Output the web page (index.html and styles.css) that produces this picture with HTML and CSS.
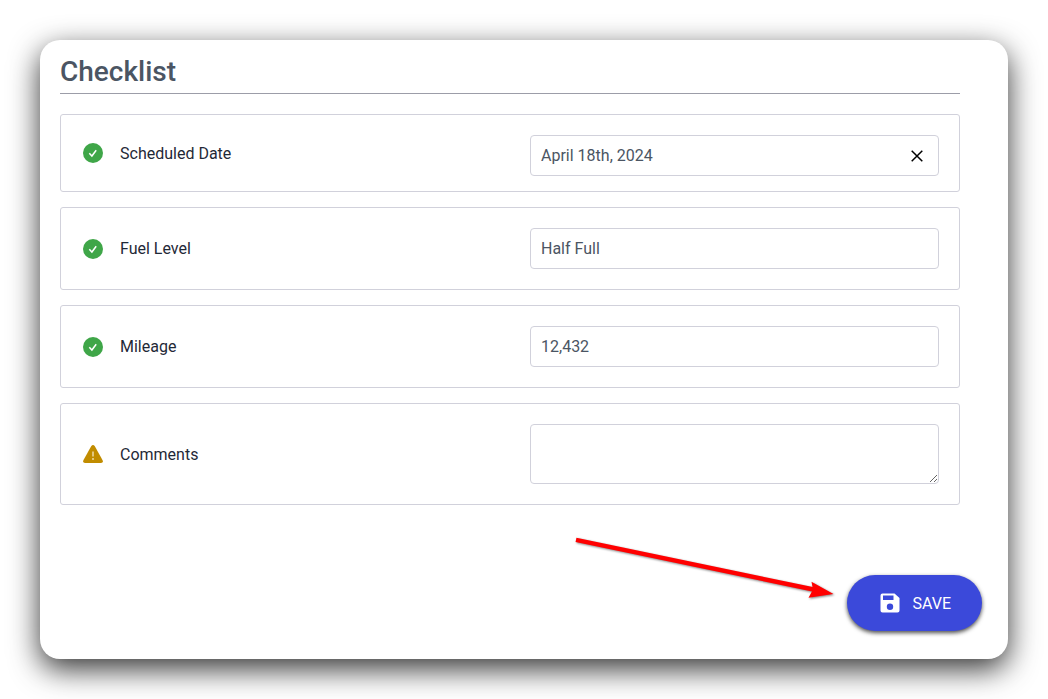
FILE: index.html
```
<!DOCTYPE html>
<html lang="en">

<head>
	<meta charset="UTF-8">
	<meta name="viewport" content="width=device-width, initial-scale=1">
	<title>Checklist</title>
	<link rel="stylesheet" href="styles.css">
</head>

<body>
	<form class="card">
		<div class="checklist">
			<h1>Checklist</h1>
			<div class="row row-date">
				<div class="name">
					<svg class="icon" viewBox="0 0 20 20" aria-hidden="true">
						<circle cx="10" cy="10" r="10" fill="#3fa648" />
						<path d="M6.3 10.300l2.600 2.700 4.300-5.800" fill="none" stroke="#fff" stroke-width="1.500" />
					</svg>
					<label for="date">Scheduled Date</label>
				</div>
				<div class="field">
					<input type="text" id="date" value="April 18th, 2024">
					<button type="button" class="clear" aria-label="Clear date">
						<svg viewBox="0 0 12 12" aria-hidden="true">
							<path d="M.7 .7l10.6 10.6M11.3 .7L.7 11.3" stroke="#000" stroke-width="1.5" />
						</svg>
					</button>
				</div>
			</div>
			<div class="row">
				<div class="name">
					<svg class="icon" viewBox="0 0 20 20" aria-hidden="true">
						<circle cx="10" cy="10" r="10" fill="#3fa648" />
						<path d="M6.3 10.300l2.600 2.700 4.300-5.800" fill="none" stroke="#fff" stroke-width="1.500" />
					</svg>
					<label for="fuel">Fuel Level</label>
				</div>
				<div class="field">
					<input type="text" id="fuel" value="Half Full">
				</div>
			</div>
			<div class="row">
				<div class="name">
					<svg class="icon" viewBox="0 0 20 20" aria-hidden="true">
						<circle cx="10" cy="10" r="10" fill="#3fa648" />
						<path d="M6.3 10.300l2.600 2.700 4.300-5.800" fill="none" stroke="#fff" stroke-width="1.500" />
					</svg>
					<label for="mileage">Mileage</label>
				</div>
				<div class="field">
					<input type="text" id="mileage" value="12,432">
				</div>
			</div>
			<div class="row">
				<div class="name">
					<svg class="icon" viewBox="0 0 20 20" aria-hidden="true">
						<path d="M8.3 2Q10-.1 11.7 2L19.6 16.300Q20.600 19 18 19H2Q-.6 19 .4 16.300Z" fill="#c18c00" />
						<path d="M10 7.500v5M10 14v2" stroke="#f3e6c4" stroke-width="1.300" />
					</svg>
					<label for="comments">Comments</label>
				</div>
				<div class="field">
					<textarea id="comments"></textarea>
				</div>
			</div>
		</div>
		<div class="footer">
			<svg class="arrow" viewBox="0 0 260 64" aria-hidden="true">
				<path d="M2 3.800L242 54" stroke="#f00" stroke-width="4.400" />
				<path d="M259.500 58L234.500 61.700 239 53.500 237.500 45.700Z" fill="#f00" />
			</svg>
			<button type="submit" class="save">
				<svg viewBox="0 0 20 20" aria-hidden="true">
					<path fill-rule="evenodd" d="M2 0.500H14.500L19.500 5V17.500Q19.500 19.500 17.500 19.500H2.500Q.5 19.500 .5 17.500V2.500Q.5 .5 2.500 .5ZM3 2.500V7H13.500V2.500ZM10 10.500A3.200 3.200 0 1 0 10 16.900A3.200 3.200 0 1 0 10 10.500Z" fill="#fff" />
				</svg>
				SAVE
			</button>
		</div>
	</form>
</body>

</html>
```
FILE: styles.css
```
* {
	box-sizing: border-box;
}

body {
	margin: 0;
	padding: 40px;
	background: #fff;
	color: #1f2937;
	font: 16px/25px Roboto, sans-serif;
}

input,
textarea,
button {
	font: inherit;
}

.card {
	padding: 10px 26px 28px 20px;
	background: #fff;
	border-radius: 20px;
	box-shadow: 0 10px 30px rgba(0, 0, 0, 0.8);
}

.checklist {
	display: flex;
	flex-direction: column;
	gap: 15px;
	margin-right: 22px;
}

h1 {
	margin: 0 0 5px;
	border-bottom: 1px solid #9c9da8;
	color: #4b5563;
	font-size: 28px;
	font-weight: 500;
	line-height: 43px;
}

.row {
	display: grid;
	grid-template-columns: 1fr 1fr;
	align-items: center;
	border: 1px solid #d1d1db;
	border-radius: 3px;
}

.name {
	display: flex;
	align-items: center;
	gap: 17px;
	padding-left: 22px;
}

.icon {
	width: 20px;
	height: 20px;
}

.field {
	display: flex;
	position: relative;
	margin: 20px;
}

.row-date .field {
	margin-bottom: 15px;
}

.field input,
.field textarea {
	width: 100%;
	height: 41px;
	padding: 7px 10px;
	border: 1px solid #d1d1db;
	border-radius: 4px;
	background: #fff;
	color: #4b5563;
}

.field textarea {
	height: 60px;
	resize: vertical;
}

/* sits over the right end of the date box */
.clear {
	position: absolute;
	top: 0;
	right: 6px;
	width: 32px;
	height: 41px;
	padding: 0;
	border: 0;
	background: none;
	cursor: pointer;
}

.clear svg {
	display: block;
	width: 12px;
	height: 12px;
	margin: 0 auto;
}

.footer {
	display: flex;
	position: relative;
	justify-content: flex-end;
	padding-top: 70px;
}

.arrow {
	position: absolute;
	top: 31px;
	right: 148px;
	width: 260px;
	height: 64px;
	filter: drop-shadow(1px 1px 1px rgba(0, 0, 0, 0.5));
	pointer-events: none;
}

.save {
	display: flex;
	align-items: center;
	gap: 12px;
	height: 56px;
	padding: 0 31px 0 33px;
	border: 0;
	border-radius: 28px;
	background: #3b49da;
	box-shadow: 0 2px 4px rgba(0, 0, 0, 0.7);
	color: #fff;
	cursor: pointer;
}

.save svg {
	width: 20px;
	height: 20px;
}
```
